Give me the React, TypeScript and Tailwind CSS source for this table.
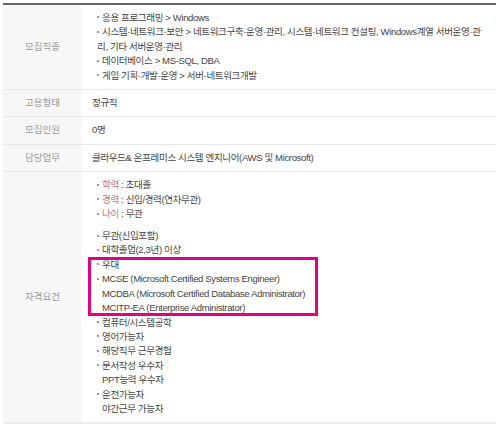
import React from 'react';

// One bulleted line; "sub" lines continue the previous item without a bullet
const Item: React.FC<{ children: React.ReactNode; sub?: boolean }> = ({ children, sub }) => (
    <div className={sub ? 'pl-[5px]' : ''}>
        {!sub && <span className="inline-block w-[2px] h-[2px] bg-[#9a9a9a] align-middle mr-[3px] mb-[2px]" />}
        {children}
    </div>
);

const Row: React.FC<{ label: string; children: React.ReactNode; last?: boolean }> = ({ label, children, last }) => (
    <div className={`flex ${last ? 'border-b-2 border-[#ececec]' : 'border-b border-[#e9e9e9]'}`}>
        <div className="w-[79px] shrink-0 bg-[#f7f7f7] flex items-center justify-center text-[#9a9a9a] tracking-[0px]">
            {label}
        </div>
        <div className="flex-1 pl-[10px] pr-2 py-[6px] text-[#444] whitespace-nowrap">{children}</div>
    </div>
);

export default function App() {
    return (
        <div className="bg-white w-[500px] h-[430px] pt-[3px] pl-[3px]">
            <div className="w-[493px] border-t-2 border-[#666] font-['Liberation_Sans','Noto_Sans_CJK_KR',sans-serif] text-[9.5px] leading-[14.4px] tracking-[-0.35px]">
                <Row label="모집직종">
                    <div className="pl-[5px]">
                        <Item>응용 프로그래밍 &gt; Windows</Item>
                        <Item>시스템·네트워크·보안 &gt; 네트워크구축·운영·관리, 시스템·네트워크 컨설팅, Windows계열 서버운영·관</Item>
                        <div>리, 기타 서버운영·관리</div>
                        <Item>데이터베이스 &gt; MS-SQL, DBA</Item>
                        <Item>게임 기획·개발·운영 &gt; 서버·네트워크개발</Item>
                    </div>
                </Row>
                <Row label="고용형태">정규직</Row>
                <Row label="모집인원">0명</Row>
                <Row label="담당업무">클라우드&amp; 온프레미스 시스템 엔지니어(AWS 및 Microsoft)</Row>
                <Row label="자격요건" last>
                    <div className="pl-[5px]">
                        <Item><span className="text-[#b8707f]">학력</span> : 초대졸</Item>
                        <Item><span className="text-[#b8707f]">경력</span> : 신입/경력(연차무관)</Item>
                        <Item><span className="text-[#b8707f]">나이</span> : 무관</Item>
                        <div className="h-[7.6px]" />
                        <Item>무관(신입포함)</Item>
                        <Item>대학졸업(2,3년) 이상</Item>
                        {/* highlighted block */}
                        <div className="relative">
                            <div className="absolute left-[-9px] top-[-1px] bottom-0 w-[230px] border-[3px] border-[#e4007f]" />
                            <Item>우대</Item>
                            <Item>MCSE (Microsoft Certified Systems Engineer)</Item>
                            <Item sub>MCDBA (Microsoft Certified Database Administrator)</Item>
                            <Item sub>MCITP-EA (Enterprise Administrator)</Item>
                        </div>
                        <Item>컴퓨터/시스템공학</Item>
                        <Item>영어가능자</Item>
                        <Item>해당직무 근무경험</Item>
                        <Item>문서작성 우수자</Item>
                        <Item sub>PPT능력 우수자</Item>
                        <Item>운전가능자</Item>
                        <Item sub>야간근무 가능자</Item>
                    </div>
                </Row>
            </div>
        </div>
    );
}
